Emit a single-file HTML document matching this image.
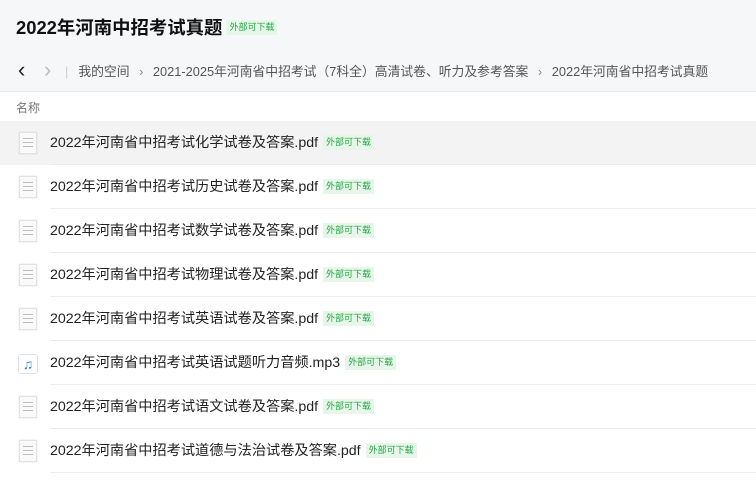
<!DOCTYPE html>
<html><head><meta charset="utf-8"><style>
*{margin:0;padding:0;box-sizing:border-box}
body{width:756px;height:481px;overflow:hidden;background:#fff;font-family:"Liberation Sans","Noto Sans CJK SC",sans-serif;position:relative}
.top{position:absolute;left:0;top:0;width:756px;height:92px;background:#f6f7f9;border-bottom:1px solid #e8e8e8}
.title{position:absolute;left:16px;top:14px;font-size:18.4px;font-weight:bold;color:#111;white-space:nowrap}
.tag{display:inline-block;background:#e6f7ea;color:#23a543;font-size:9px;font-weight:normal;padding:1px 3px;line-height:13px;vertical-align:middle;margin-left:4px;position:relative;top:-2px}
.bc{position:absolute;left:18px;top:60px;font-size:12.8px;color:#555;white-space:nowrap;line-height:18px}
.bc span{display:inline-block}
.hd{position:absolute;left:16px;top:99px;font-size:12px;color:#777}
.row{position:absolute;left:0;width:756px;height:44px}
.row .line{position:absolute;left:50px;right:0;bottom:0;border-bottom:1px solid #ececec}
.row .nm{position:absolute;left:50px;top:13px;font-size:14.2px;color:#222;white-space:nowrap;line-height:18px}
.row .nm .tag{top:-1px;margin-left:5px}
.ic{position:absolute;left:19px;top:11px;width:18px;height:22px;background:#fafafa;border:1px solid #e2e2e2;box-shadow:0 0 1px #ccc}
.ic i{position:absolute;left:3px;right:3px;height:1px;background:#bbb}
.mp{position:absolute;left:18px;top:13px;width:20px;height:20px;border:1px solid #dde;border-radius:3px;background:#fff;color:#2f86f6;font-size:14px;text-align:center;line-height:18px;font-weight:bold}
</style></head><body>
<div class="top"></div>
<div class="title">2022年河南中招考试真题<span class="tag">外部可下载</span></div>
<div class="bc"><span style="font-size:22px;color:#222;width:26px;position:relative;top:1px">‹</span><span style="font-size:22px;color:#bbb;width:18px;position:relative;top:1px">›</span><span style="color:#ccc;margin:0 10px 0 3px">|</span>我的空间 <span style="color:#888;margin:0 6px">›</span> 2021-2025年河南省中招考试（7科全）高清试卷、听力及参考答案 <span style="color:#888;margin:0 6px">›</span> 2022年河南省中招考试真题</div>
<div class="hd">名称</div>

<div class="row" style="top:121px;background:#f3f3f3"><div class="ic"><i style="top:5px"></i><i style="top:9px"></i><i style="top:13px"></i></div><div class="nm">2022年河南省中招考试化学试卷及答案.pdf<span class="tag">外部可下载</span></div><div class="line"></div></div>
<div class="row" style="top:165px"><div class="ic"><i style="top:5px"></i><i style="top:9px"></i><i style="top:13px"></i></div><div class="nm">2022年河南省中招考试历史试卷及答案.pdf<span class="tag">外部可下载</span></div><div class="line"></div></div>
<div class="row" style="top:209px"><div class="ic"><i style="top:5px"></i><i style="top:9px"></i><i style="top:13px"></i></div><div class="nm">2022年河南省中招考试数学试卷及答案.pdf<span class="tag">外部可下载</span></div><div class="line"></div></div>
<div class="row" style="top:253px"><div class="ic"><i style="top:5px"></i><i style="top:9px"></i><i style="top:13px"></i></div><div class="nm">2022年河南省中招考试物理试卷及答案.pdf<span class="tag">外部可下载</span></div><div class="line"></div></div>
<div class="row" style="top:297px"><div class="ic"><i style="top:5px"></i><i style="top:9px"></i><i style="top:13px"></i></div><div class="nm">2022年河南省中招考试英语试卷及答案.pdf<span class="tag">外部可下载</span></div><div class="line"></div></div>
<div class="row" style="top:341px"><div class="mp">♫</div><div class="nm">2022年河南省中招考试英语试题听力音频.mp3<span class="tag">外部可下载</span></div><div class="line"></div></div>
<div class="row" style="top:385px"><div class="ic"><i style="top:5px"></i><i style="top:9px"></i><i style="top:13px"></i></div><div class="nm">2022年河南省中招考试语文试卷及答案.pdf<span class="tag">外部可下载</span></div><div class="line"></div></div>
<div class="row" style="top:429px"><div class="ic"><i style="top:5px"></i><i style="top:9px"></i><i style="top:13px"></i></div><div class="nm">2022年河南省中招考试道德与法治试卷及答案.pdf<span class="tag">外部可下载</span></div><div class="line"></div></div>
</body></html>
